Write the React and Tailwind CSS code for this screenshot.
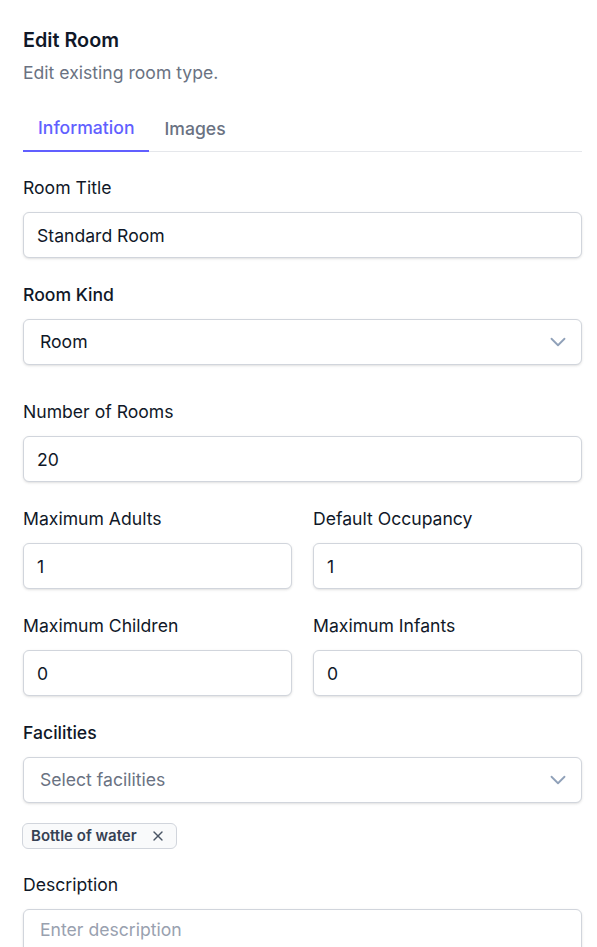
import { ChevronDown, X } from "lucide-react";

const inputCls =
  "block w-full h-[46px] rounded-md border border-gray-300 bg-white px-[13px] text-[17.6px] text-gray-900 shadow-sm outline-none placeholder:text-gray-400";

const Field = ({ label, value, className = "" }) => (
  <div className={className}>
    <label className="mb-[11px] block text-[17.6px] leading-[26px] text-gray-900">{label}</label>
    <input className={inputCls} defaultValue={value} />
  </div>
);

const SelectBox = ({ value, placeholder }) => (
  <div className="flex h-[46px] w-full items-center justify-between rounded-md border border-gray-300 bg-white pl-4 pr-[10px] shadow-sm">
    <span className={value ? "text-[17.6px] text-gray-900" : "text-[17.6px] text-gray-500"}>
      {value || placeholder}
    </span>
    <ChevronDown className="h-[26px] w-[26px] text-slate-400" strokeWidth={1.7} />
  </div>
);

export default function App() {
  return (
    <div
      className="min-h-screen bg-white pl-[23px] pr-[15px] pt-[25px]"
      style={{ fontFamily: "Inter, 'Noto Sans', sans-serif" }}
    >
      <h2 className="text-[19.8px] font-semibold leading-[31px] text-gray-900">Edit Room</h2>
      <p className="mt-[4px] text-[17.6px] leading-[26px] text-gray-500">Edit existing room type.</p>

      {/* tabs */}
      <div className="mt-[29px] flex border-b border-gray-200">
        <button className="-mb-px border-b-2 border-indigo-500 px-[15px] pb-[9px] text-[17.6px] font-medium leading-[26px] text-indigo-500">
          Information
        </button>
        <button className="px-[15px] pb-[9px] text-[17.6px] font-medium leading-[26px] text-gray-500">
          Images
        </button>
      </div>

      <div className="mt-[23px]">
        <Field label="Room Title" value="Standard Room" />

        <div className="mt-[24px]">
          <label className="mb-[11px] block text-[17.6px] font-medium leading-[26px] text-gray-900">Room Kind</label>
          <SelectBox value="Room" />
        </div>

        <Field label="Number of Rooms" value="20" className="mt-[34px]" />

        <div className="mt-[24px] grid grid-cols-2 gap-x-[21px] gap-y-[24px]">
          <Field label="Maximum Adults" value="1" />
          <Field label="Default Occupancy" value="1" />
          <Field label="Maximum Children" value="0" />
          <Field label="Maximum Infants" value="0" />
        </div>

        <div className="mt-[24px]">
          <label className="mb-[11px] block text-[17.6px] font-medium leading-[26px] text-gray-900">Facilities</label>
          <SelectBox placeholder="Select facilities" />
          <div className="mt-[20px] -ml-px inline-flex h-[26px] items-center gap-[13px] rounded-md border border-gray-300 bg-gray-50 pl-2 pr-[10px] text-[15px] font-semibold text-gray-700">
            Bottle of water
            <X className="h-4 w-4 text-gray-600" strokeWidth={2} />
          </div>
        </div>

        <div className="mt-[23px]">
          <label className="mb-[11px] block text-[17.6px] leading-[26px] text-gray-900">Description</label>
          <textarea
            className="block h-[90px] w-full resize-none rounded-md border border-gray-300 bg-white px-4 py-[7px] text-[17.6px] leading-[26px] text-gray-900 shadow-sm outline-none placeholder:text-gray-400"
            placeholder="Enter description"
          />
        </div>
      </div>
    </div>
  );
}
